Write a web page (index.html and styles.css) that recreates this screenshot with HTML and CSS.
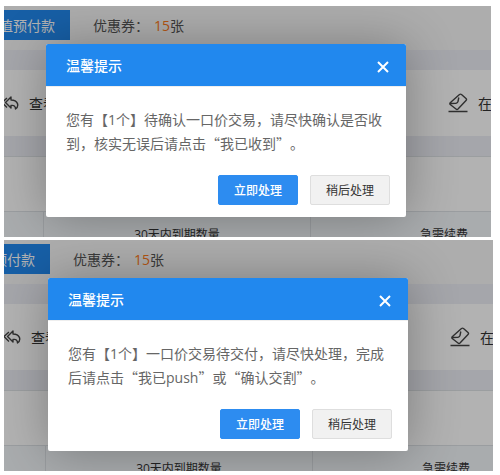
FILE: index.html
```html
<!DOCTYPE html>
<html lang="zh-CN">
<head>
<meta charset="utf-8">
<title>温馨提示</title>
<link rel="stylesheet" href="styles.css">
</head>
<body>
<svg class="sprite" aria-hidden="true">
  <symbol id="reply" viewBox="0 0 18 16">
    <path d="M6 3 L1 7.500 L6 12.500 M10 2 L4.500 7.500 L10 13 V10.500 C13 10 14.500 11 14.500 14 C18.500 11 17 5 10 5 Z"/>
  </symbol>
  <symbol id="eraser" viewBox="0 0 20 20">
    <path d="M11.500 1.500 Q12.500 .700 13.500 1.500 L18 5.500 Q19 6.500 18 7.500 L10 16 Q9 17 8 16 L2.200 11.500 Q1.500 10.500 2.200 9.700 Z M2.500 10.500 L8 10.300 Q9.800 10 10 8.500 L10.800 4.500 M.500 18.500 H19.500"/>
  </symbol>
</svg>

<section class="panel panel-first">
  <div class="account">
    <button class="recharge" type="button">值预付款</button>
    <span class="coupon">优惠券：<b class="count">15</b>张</span>
  </div>
  <nav class="links">
    <a class="link" href="#"><svg class="icon-reply"><use href="#reply"/></svg>查看</a>
    <a class="link link-end" href="#"><svg class="icon-eraser"><use href="#eraser"/></svg>在</a>
  </nav>
  <div class="space"></div>
  <div class="summary">
    <table class="stats">
      <tr><th class="lead"></th><th><span class="latin">30</span>天内到期数量</th><th>急需续费</th></tr>
    </table>
  </div>
  <div class="shade"></div>
  <div class="dialog" role="dialog" aria-labelledby="title-1">
    <header class="dialog-head">
      <h2 class="dialog-title" id="title-1">温馨提示</h2>
      <button class="close" type="button" aria-label="关闭"><svg class="icon-close" viewBox="0 0 12 12"><path d="M1 1 L11 11 M11 1 L1 11"/></svg></button>
    </header>
    <p class="message">您有【<span class="latin">1</span>个】待确认一口价交易，请尽快确认是否收到，核实无误后请点击“我已收到”。</p>
    <footer class="actions">
      <button class="btn btn-primary" type="button">立即处理</button>
      <button class="btn" type="button">稍后处理</button>
    </footer>
  </div>
</section>

<section class="panel panel-second">
  <div class="account">
    <button class="recharge" type="button">预付款</button>
    <span class="coupon">优惠券：<b class="count">15</b>张</span>
  </div>
  <nav class="links">
    <a class="link" href="#"><svg class="icon-reply"><use href="#reply"/></svg>查看</a>
    <a class="link link-end" href="#"><svg class="icon-eraser"><use href="#eraser"/></svg>在</a>
  </nav>
  <div class="space"></div>
  <div class="summary">
    <table class="stats">
      <tr><th class="lead"></th><th><span class="latin">30</span>天内到期数量</th><th>急需续费</th></tr>
    </table>
  </div>
  <div class="shade"></div>
  <div class="dialog" role="dialog" aria-labelledby="title-2">
    <header class="dialog-head">
      <h2 class="dialog-title" id="title-2">温馨提示</h2>
      <button class="close" type="button" aria-label="关闭"><svg class="icon-close" viewBox="0 0 12 12"><path d="M1 1 L11 11 M11 1 L1 11"/></svg></button>
    </header>
    <p class="message">您有【<span class="latin">1</span>个】一口价交易待交付，请尽快处理，完成后请点击“我已<span class="latin">push</span>”或“确认交割”。</p>
    <footer class="actions">
      <button class="btn btn-primary" type="button">立即处理</button>
      <button class="btn" type="button">稍后处理</button>
    </footer>
  </div>
</section>
</body>
</html>
```

FILE: styles.css
```css
* {
  box-sizing: border-box;
}

body {
  margin: 0;
  padding: 6px 7px 4px 4px;
  display: flex;
  flex-direction: column;
  gap: 3px;
  background: #fff;
  color: #333;
  font: 14px/20px "Noto Sans CJK SC", sans-serif;
  text-spacing-trim: space-all;
}

button {
  padding: 0;
  border: 0;
  font: inherit;
  cursor: pointer;
}

.latin,
.count {
  font-family: "Open Sans", "Noto Sans CJK SC", sans-serif;
  line-height: 1;
}

.sprite {
  position: absolute;
  width: 0;
  height: 0;
}

.panel {
  --shift: 0px;
  --recharge: 66px;
  position: relative;
  overflow: hidden;
  background: #fff;
}

.panel-first {
  margin-right: 2px;
}

.panel-second {
  --shift: 2px;
  --recharge: 46px;
}

/* Page behind the dialog */
.account {
  display: flex;
  align-items: center;
  gap: 23px;
  height: 44px;
  padding-bottom: 6px;
  background: #f8f8f8;
}

.recharge {
  display: flex;
  justify-content: flex-end;
  align-items: center;
  width: var(--recharge);
  height: 30px;
  padding-right: 15px;
  overflow: hidden;
  background: #2188ee;
  color: #fff;
  white-space: nowrap;
}

.coupon {
  color: #555;
}

.count {
  margin-left: 5px;
  color: #ff7a1a;
  font-weight: 400;
}

.links {
  display: flex;
  justify-content: space-between;
  align-items: center;
  height: 86px;
  border-top: 20px solid #eceef5;
  padding-left: var(--shift);
}

.link {
  display: flex;
  align-items: center;
  gap: 10px;
  color: #333;
  text-decoration: none;
}

.link-end {
  margin-right: -1px;
}

.icon-reply,
.icon-eraser {
  fill: none;
  stroke: #444;
  stroke-width: 1.4;
  stroke-linejoin: round;
}

.icon-reply {
  width: 18px;
  height: 16px;
  margin-left: -3px;
}

.icon-eraser {
  width: 20px;
  height: 20px;
}

.space {
  height: 75px;
  border-top: 20px solid #eceef5;
  box-shadow: inset 0 1px #dfe2e6;
}

.summary {
  height: 26px;
  overflow: hidden;
}

.stats {
  table-layout: fixed;
  width: calc(574px + var(--shift));
  border-collapse: separate;
  border-spacing: 0;
  font-size: 12px;
}

.stats th {
  height: 44px;
  padding: 0;
  border-top: 1px solid #dde1e5;
  border-right: 1px solid #dde1e5;
  background: #f2f6fa;
  font-weight: 400;
}

.stats .lead {
  width: calc(40px + var(--shift));
}

/* Dialog */
.shade {
  position: absolute;
  inset: 0;
  background: rgba(0, 0, 0, 0.3);
}

.dialog {
  position: absolute;
  top: 38px;
  left: calc(42px + var(--shift));
  width: 360px;
  border-radius: 2px;
  background: #fff;
  box-shadow: 1px 1px 50px rgba(0, 0, 0, 0.3);
}

.dialog-head {
  display: flex;
  justify-content: space-between;
  align-items: center;
  height: 43px;
  padding: 0 17px 0 20px;
  border-bottom: 1px solid #eee;
  border-radius: 2px 2px 0 0;
  background: #2188ee;
  color: #fff;
}

.dialog-title {
  margin: 0;
  font-size: 14px;
  font-weight: 500;
}

.close {
  display: flex;
  padding-top: 4px;
  background: none;
}

.icon-close {
  width: 12px;
  height: 12px;
  fill: none;
  stroke: #fff;
  stroke-width: 2;
}

.message {
  margin: 0;
  padding: 20px;
  color: #666;
  line-height: 24px;
}

.actions {
  display: flex;
  justify-content: flex-end;
  gap: 12px;
  padding: 0 16px 12px;
}

.btn {
  width: 80px;
  height: 30px;
  border: 1px solid #dedede;
  border-radius: 2px;
  background: #f1f1f1;
  color: #333;
  font-size: 12px;
}

.btn-primary {
  border-color: #2d8cf0;
  background: #2d8cf0;
  color: #fff;
  font-weight: 500;
}
```
